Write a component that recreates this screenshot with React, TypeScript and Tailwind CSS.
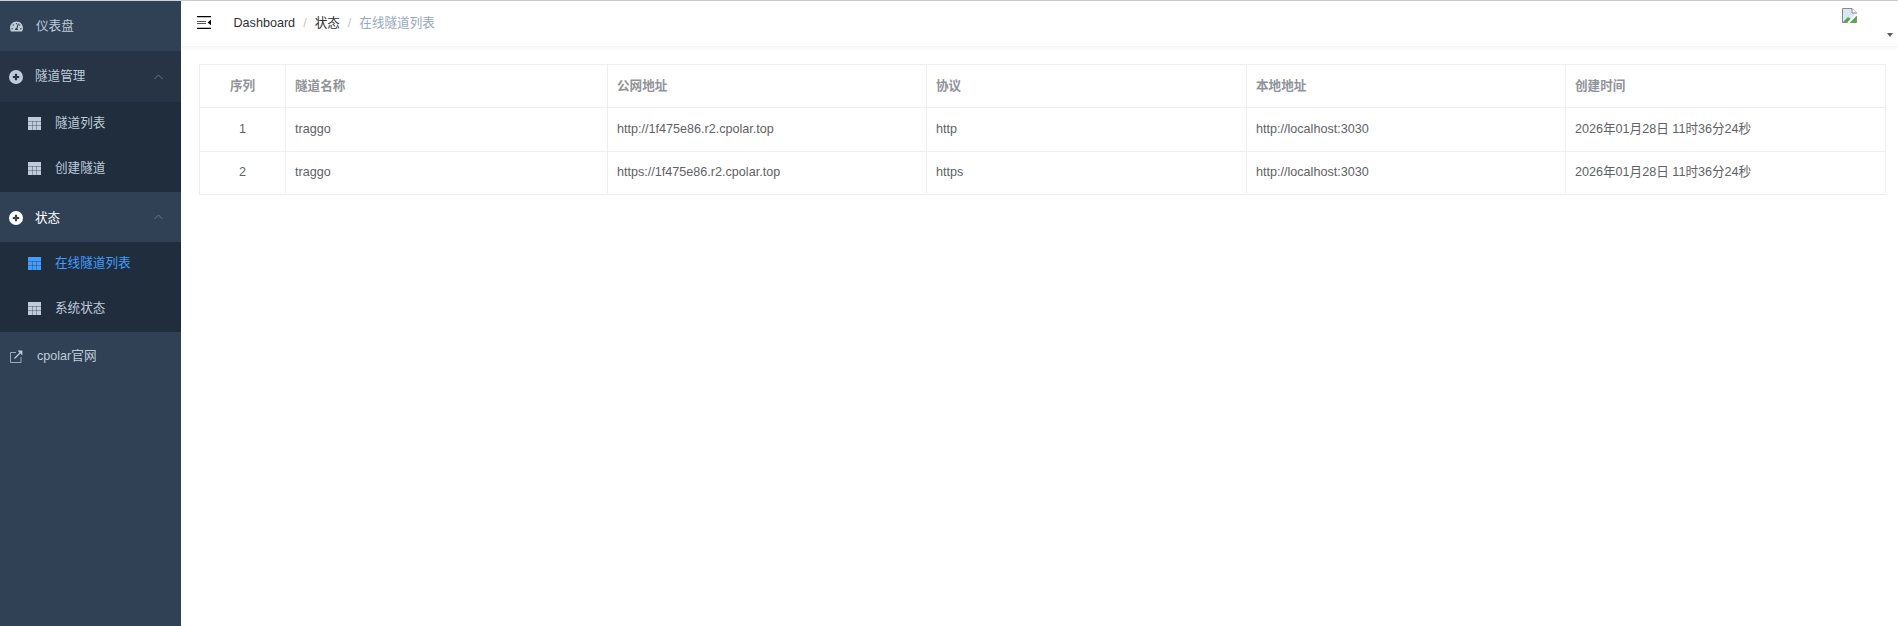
import React from "react";
import { FaTachometerAlt } from "react-icons/fa";

const font = "[font-family:'Liberation_Sans','Noto_Sans_CJK_SC',sans-serif]";

function PlusCircle({ bg }: { bg: string }) {
  return (
    <svg width="14" height="14" viewBox="0 0 14 14">
      <circle cx="7" cy="7" r="7" fill="currentColor" />
      <path d="M7 3.8V10.2M3.8 7H10.2" stroke={bg} strokeWidth="2.2" fill="none" />
    </svg>
  );
}

function LinkIcon() {
  return (
    <svg width="13" height="13" viewBox="0 0 13 13" fill="none" stroke="currentColor">
      <path d="M6 2.5H0.5V12.5H11V7" strokeOpacity="0.75" />
      <path d="M4.5 8.5L11 2" strokeWidth="1.3" />
      <path d="M7.5 0.6H12.4V5.5Z" fill="currentColor" stroke="none" />
    </svg>
  );
}

function TableIcon({ active }: { active?: boolean }) {
  const c = active ? "#409eff" : "#bfcbd9";
  return (
    <svg width="13" height="13" viewBox="0 0 13 13" className="shrink-0">
      <rect x="0" y="0" width="13" height="13" fill={c} />
      <path d="M0 4.5H13M0 8.5H13M4.5 4V13M8.5 4V13" stroke="#1f2d3d" strokeOpacity="0.35" strokeWidth="1" fill="none" />
    </svg>
  );
}

function Chevron() {
  return (
    <svg width="10" height="6" viewBox="0 0 10 6" className="absolute left-[154px] top-1/2 -translate-y-1/2" fill="none" stroke="#66758a" strokeWidth="1">
      <path d="M0.5 5L4.5 1L8.5 5" />
    </svg>
  );
}

function TopItem({ icon, label, chevron, bg = "bg-[#304156]", white, offset = "ml-[13px]", nudge = "" }: { icon: React.ReactNode; label: string; chevron?: boolean; bg?: string; white?: boolean; offset?: string; nudge?: string }) {
  return (
    <div className={`relative flex h-[50.4px] items-center pl-[9px] text-[12.6px] ${bg} ${nudge} ${white ? "text-white" : "text-[#bfcbd9]"}`}>
      <span className="flex w-[14px] justify-center">{icon}</span>
      <span className={offset}>{label}</span>
      {chevron && <Chevron />}
    </div>
  );
}

function SubItem({ label, active }: { label: string; active?: boolean }) {
  return (
    <div className={`flex h-[45px] items-center pb-[2px] pl-[28px] text-[12.6px] bg-[#1f2d3d] ${active ? "text-[#409eff]" : "text-[#bfcbd9]"}`}>
      <TableIcon active={active} />
      <span className="ml-[14px]">{label}</span>
    </div>
  );
}

function BrokenImage() {
  return (
    <svg width="15" height="15" viewBox="0 0 15 15" className="block">
      <path d="M0.5 0.5H10L14.5 5V14.5H0.5Z" fill="#dbe7f5" stroke="#8a8a8a" />
      <path d="M10 0.5V5H14.5" fill="#fff" stroke="#8a8a8a" />
      <path d="M1 14L6 9L9 11L13 7L14 8V14Z" fill="#4caf3c" />
      <path d="M6 15L15 6" stroke="#fff" strokeWidth="2" />
    </svg>
  );
}

const columns = ["隧道名称", "公网地址", "协议", "本地地址", "创建时间"];
const rows = [
  ["1", "traggo", "http://1f475e86.r2.cpolar.top", "http", "http://localhost:3030", "2026年01月28日 11时36分24秒"],
  ["2", "traggo", "https://1f475e86.r2.cpolar.top", "https", "http://localhost:3030", "2026年01月28日 11时36分24秒"],
];
const heights = ["h-[43px]", "h-[44px]", "h-[43px] pb-px"];

export default function App() {
  return (
    <div className={`h-[626px] w-[1898px] overflow-hidden bg-white ${font}`}>
      <div className="h-px bg-[#d0d0d0]" />
      <div className="flex h-[625px]">
        <aside className="w-[181px] shrink-0 bg-[#304156]">
          <TopItem icon={<FaTachometerAlt size={13} />} label="仪表盘" />
          <TopItem icon={<PlusCircle bg="#263445" />} label="隧道管理" chevron bg="bg-[#263445]" offset="ml-[12px]" />
          <SubItem label="隧道列表" />
          <SubItem label="创建隧道" />
          <TopItem icon={<PlusCircle bg="#304156" />} label="状态" chevron white offset="ml-[12px]" nudge="pt-[2px]" />
          <SubItem label="在线隧道列表" active />
          <SubItem label="系统状态" />
          <TopItem icon={<LinkIcon />} label="cpolar官网" offset="ml-[14px]" nudge="pb-[2px]" />
        </aside>
        <main className="min-w-0 flex-1">
          <header className="flex h-[45px] items-center shadow-[0_1px_4px_rgba(0,21,41,0.08)]">
            <svg width="14" height="13" viewBox="0 0 14 13" className="mb-[3px] ml-[16px] shrink-0">
              <path d="M0 0h14v1.2H0zM0 11.8h14V13H0z" fill="#000" />
              <path d="M0 5h9v1H0zM0 7h9v1H0z" fill="#555" />
              <path d="M14 3.8v5.4L10.6 6.5z" fill="#000" />
            </svg>
            <nav className="ml-[22.5px] flex items-center text-[12.6px]">
              <span className="text-[#303133]">Dashboard</span>
              <span className="mx-[8px] text-[#c0c4cc]">/</span>
              <span className="text-[#303133]">状态</span>
              <span className="mx-[8px] text-[#c0c4cc]">/</span>
              <span className="text-[#97a8be]">在线隧道列表</span>
            </nav>
            <div className="relative ml-auto mb-[17px] mr-[41px] shrink-0">
              <BrokenImage />
              <span className="absolute left-[45px] top-[25px] h-0 w-0 border-x-[3.5px] border-t-[4px] border-x-transparent border-t-[#5a5e66]" />
            </div>
          </header>
          <div className="pl-[18px] pr-[12px] pt-[18px]">
            <div className="border-t border-l border-[#ebeef5] text-[12.6px]">
              {[["序列", ...columns], ...rows].map((r, i) => (
                <div key={i} className={`grid grid-cols-[86px_322px_319px_320px_319px_1fr] border-b border-[#ebeef5] ${heights[i]}`}>
                  {r.map((c, j) => (
                    <div key={j} className={`flex items-center border-r border-[#ebeef5] ${j === 0 ? "justify-center" : "pl-[9px]"} ${i === 0 ? "font-bold text-[#909399]" : "text-[#606266]"}`}>
                      {c}
                    </div>
                  ))}
                </div>
              ))}
            </div>
          </div>
        </main>
      </div>
    </div>
  );
}
